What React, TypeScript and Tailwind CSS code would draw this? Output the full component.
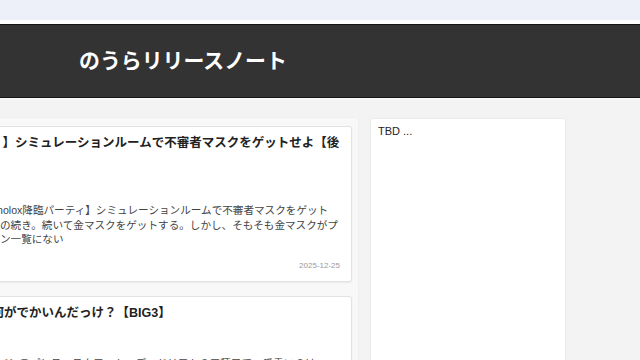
const jp = { fontFamily: '"Liberation Sans", "Noto Sans CJK JP", sans-serif' };

interface Note {
  title: string[];
  body: string[];
  date?: string;
  titleIndent: string;
  bodyIndent: string[];
}

const notes: Note[] = [
  {
    title: ['】シミュレーションルームで不審者マスクをゲットせよ【後'],
    titleIndent: 'ml-[2.5px]',
    body: [
      'holox降臨パーティ】シミュレーションルームで不審者マスクをゲット',
      'の続き。続いて金マスクをゲットする。しかし、そもそも金マスクがプ',
      'ン一覧にない',
    ],
    bodyIndent: ['-ml-[3px]', '', ''],
    date: '2025-12-25',
  },
  {
    title: ['何がでかいんだっけ？【BIG3】'],
    titleIndent: '-ml-[8.5px]',
    body: ['ベンチプレス、スクワット、デッドリフトの三種目で一番重いのは'],
    bodyIndent: ['-ml-[2px]'],
  },
];

function NoteCard({ note, first }: { note: Note; first: boolean }) {
  return (
    <div className="overflow-hidden rounded-[3px] border border-[#e2e2e2] bg-white pl-[13px] pr-[11px] pt-[8px] pb-[9px] shadow-[0_1px_2px_rgba(0,0,0,0.06)]">
      {note.title.map((t) => (
        <div key={t} className={`whitespace-nowrap text-[12.5px] font-bold leading-[17px] text-[#222] ${note.titleIndent}`}>
          {t}
        </div>
      ))}
      <div className={first ? 'mt-[51px]' : 'mt-[34px]'}>
        {note.body.map((line, i) => (
          <div key={i} className={`whitespace-nowrap text-[10.6px] leading-[14.7px] text-[#444] ${note.bodyIndent[i]}`}>
            {line}
          </div>
        ))}
      </div>
      {note.date && (
        <div className="mt-[12.6px] text-right text-[8px] leading-[12px] text-[#9a9a9a]">{note.date}</div>
      )}
    </div>
  );
}

export default function App() {
  return (
    <div className="h-[360px] w-[640px] overflow-hidden bg-[#f3f3f3]" style={jp}>
      <div className="h-[20px] bg-[#edf0f9]" />
      <div className="h-[4px] bg-white" />
      <header className="flex h-[74px] items-center border-y border-[#151515] bg-[#333] pl-[79px]">
        <h1 className="text-[20.9px] font-bold leading-none text-white">のうらリリースノート</h1>
      </header>
      <div className="h-[2px] bg-[#f8f8f8]" />
      <main className="flex items-start gap-[13px]">
        <section className="-ml-[20px] mt-[18px] flex w-[378px] flex-col gap-[14px] bg-[#f8f8f8] px-[6px] pt-[8px] shadow-[0_0_2px_rgba(0,0,0,0.05)]">
          {notes.map((n, i) => (
            <NoteCard key={i} note={n} first={i === 0} />
          ))}
        </section>
        <aside className="mt-[19px] h-[300px] w-[194px] rounded-[3px] bg-white px-[7px] pt-[6px] shadow-[0_0_3px_rgba(0,0,0,0.08)]">
          <p className="text-[11px] leading-[13px] text-[#222]" style={{ fontFamily: '"Liberation Sans", Arial, sans-serif' }}>
            TBD ...
          </p>
        </aside>
      </main>
    </div>
  );
}
